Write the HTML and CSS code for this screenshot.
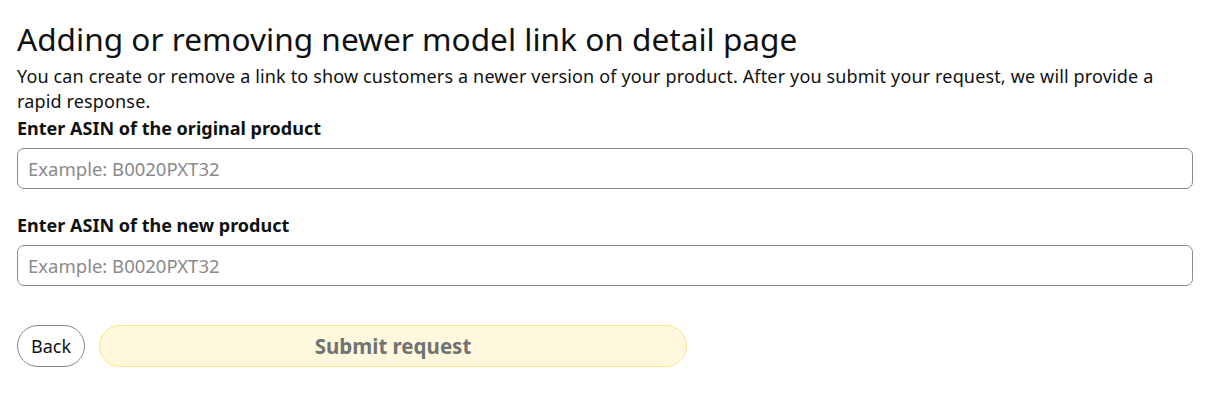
FILE: index.html
```html
<!DOCTYPE html>
<html lang="en">
<head>
<meta charset="utf-8">
<title>Adding or removing newer model link</title>
<link rel="stylesheet" href="styles.css">
</head>
<body>
<main class="page">
  <h1 class="title">Adding or removing newer model link on detail page</h1>
  <p class="intro">You can create or remove a link to show customers a newer version of your product. After you submit your request, we will provide a rapid response.</p>
  <div class="field">
    <label class="label" for="orig">Enter ASIN of the original product</label>
    <input class="input" id="orig" type="text" placeholder="Example: B0020PXT32">
  </div>
  <div class="field">
    <label class="label" for="new">Enter ASIN of the new product</label>
    <input class="input" id="new" type="text" placeholder="Example: B0020PXT32">
  </div>
  <div class="actions">
    <button class="btn-back" type="button">Back</button>
    <button class="btn-submit" type="button">Submit request</button>
  </div>
</main>
</body>
</html>
```
FILE: styles.css
```css
* { box-sizing: border-box; }
body {
  margin: 0;
  background: #fff;
  color: #0f1111;
  font-family: "Noto Sans", "Open Sans", sans-serif;
}
.page {
  padding: 17px 16px 0 17px;
}
.title {
  margin: 0;
  font-size: 31.6px;
  font-weight: 400;
  line-height: 44px;
}
.intro {
  margin: 3px 0 0;
  font-size: 18px;
  letter-spacing: 0.15px;
  line-height: 25px;
}
.field {
  display: flex;
  flex-direction: column;
}
.field + .field {
  margin-top: 22px;
}
.label {
  margin-top: 2px;
  font-size: 18px;
  font-weight: 700;
  line-height: 25px;
  margin-bottom: 7px;
}
.input {
  height: 41px;
  border: 1px solid #888c8c;
  border-radius: 7px;
  padding: 0 10px;
  font: inherit;
  font-size: 18.5px;
  color: #0f1111;
}
.input::placeholder { color: #8a8a8a; }
.actions {
  display: flex;
  gap: 14px;
  margin-top: 39px;
}
.btn-back {
  width: 68px;
  height: 42px;
  padding: 0;
  border: 1px solid #888c8c;
  border-radius: 21px;
  background: #fff;
  font: inherit;
  font-size: 18px;
  color: #0f1111;
}
.btn-submit {
  width: 588px;
  height: 42px;
  border: 1px solid #fce28a;
  border-radius: 21px;
  background: #fff8dc;
  font: inherit;
  font-size: 20.5px;
  font-weight: 700;
  color: #6f7373;
}
```
